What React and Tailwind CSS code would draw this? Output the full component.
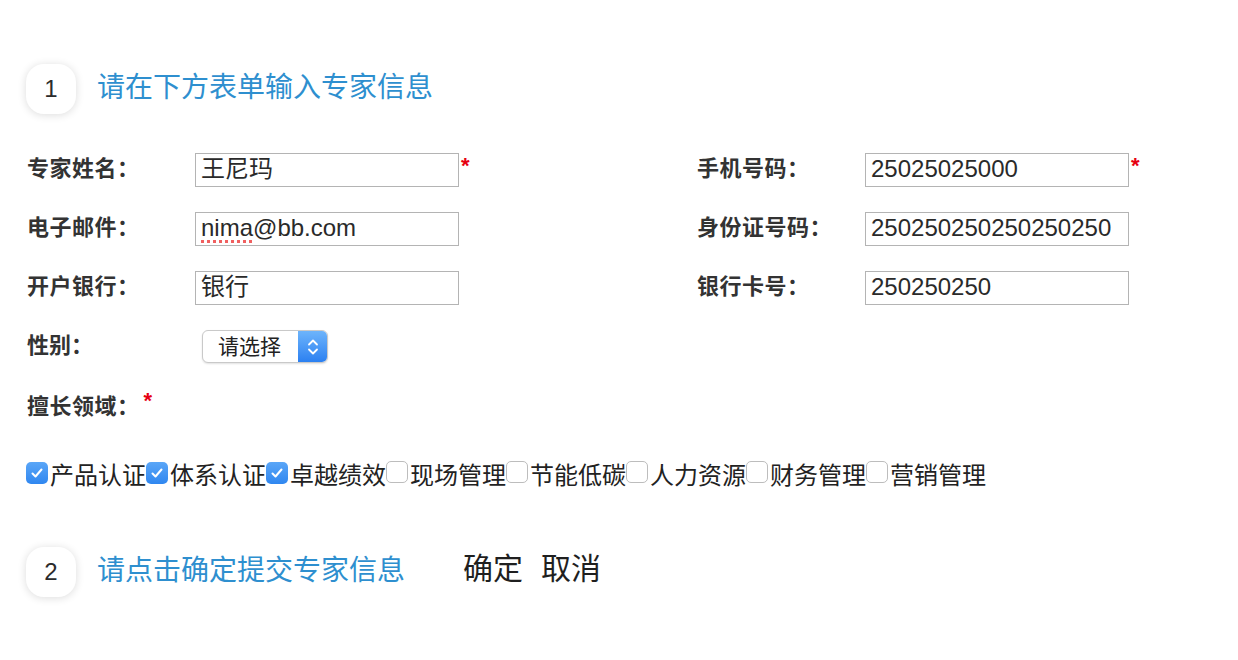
const cjk = "font-['Liberation_Sans','Noto_Sans_CJK_SC',sans-serif]"

const leftRows = [
  { label: '专家姓名：', value: '王尼玛', required: true },
  { label: '电子邮件：', value: 'nima@bb.com', spell: true },
  { label: '开户银行：', value: '银行' },
]

const rightRows = [
  { label: '手机号码：', value: '25025025000', required: true },
  { label: '身份证号码：', value: '250250250250250250' },
  { label: '银行卡号：', value: '250250250' },
]

const fields = [
  { name: '产品认证', checked: true },
  { name: '体系认证', checked: true },
  { name: '卓越绩效', checked: true },
  { name: '现场管理' },
  { name: '节能低碳' },
  { name: '人力资源' },
  { name: '财务管理' },
  { name: '营销管理' },
]

function Step({ n, children }) {
  return (
    <div className="flex items-center">
      <div className="w-[50px] h-[50px] rounded-[18px] bg-white shadow-[0_1px_8px_rgba(0,0,0,0.14)] flex items-center justify-center text-[24px] text-[#2b2b2b] font-['Liberation_Sans',sans-serif]">
        {n}
      </div>
      {children}
    </div>
  )
}

function Star() {
  return <span className="text-[#e60012] text-[22px] font-bold leading-none self-start mt-[2px] ml-[2px] font-['Liberation_Sans',sans-serif]">*</span>
}

function Row({ label, value, required, spell }) {
  return (
    <div className="flex items-center h-[34px]">
      <div className="w-[168px] -mt-[3px] text-[22px] font-bold text-[#333] tracking-[0.5px] leading-none">{label}</div>
      <div className="w-[264px] h-[34px] border border-[#b4b4b4] flex items-center px-[5px] pb-[3px] text-[24px] text-[#2a2a2a] leading-none whitespace-nowrap overflow-hidden">
        {spell ? (
          <>
            <span className="underline decoration-dotted decoration-[#f06060] decoration-[3px] underline-offset-[4px]">nima</span>
            @bb.com
          </>
        ) : (
          value
        )}
      </div>
      {required && <Star />}
    </div>
  )
}

function Box({ checked }) {
  if (checked) {
    return (
      <span className="w-[22px] h-[22px] rounded-[5px] bg-gradient-to-b from-[#5aa6f7] to-[#2f87f0] flex items-center justify-center shrink-0 -mt-[7px]">
        <svg width="16" height="16" viewBox="0 0 16 16" fill="none">
          <path d="M3.5 8.5l3 3L12.5 4.5" stroke="white" strokeWidth="2" strokeLinecap="round" strokeLinejoin="round" />
        </svg>
      </span>
    )
  }
  return <span className="w-[22px] h-[22px] rounded-[5px] bg-white border border-[#bdbdbd] shrink-0 -mt-[9px]" />
}

export default function App() {
  return (
    <div className={`min-h-screen bg-white pt-[64px] pl-[26px] ${cjk}`}>
      <Step n="1">
        <h2 className="ml-[21px] -mt-[3px] text-[28px] leading-none text-[#2e8fcf] font-normal">请在下方表单输入专家信息</h2>
      </Step>

      {/* form rows */}
      <div className="mt-[39px] pl-[1px] grid grid-cols-[670px_1fr] gap-y-[25px]">
        {leftRows.map((r, i) => (
          <div key={r.label} className="contents">
            <Row {...r} />
            <Row {...rightRows[i]} />
          </div>
        ))}
      </div>

      <div className="mt-[25px] pl-[1px] flex items-center h-[33px]">
        <div className="w-[175px] -mt-[2px] text-[22px] font-bold text-[#333] leading-none">性别：</div>
        <div className="w-[126px] h-[33px] rounded-[6px] border border-[#c9c9c9] shadow-[0_1px_2px_rgba(0,0,0,0.12)] flex overflow-hidden bg-white">
          <div className="flex-1 flex items-center pl-[15px] pb-[1px] text-[21px] text-[#222] leading-none">请选择</div>
          <div className="w-[29px] bg-gradient-to-b from-[#6db4fb] to-[#2b80f1] flex items-center justify-center">
            <svg width="14" height="22" viewBox="0 0 14 22" fill="none">
              <path d="M3 8.5L7 4.5l4 4" stroke="white" strokeWidth="1.8" strokeLinecap="round" strokeLinejoin="round" />
              <path d="M3 13.5l4 4 4-4" stroke="white" strokeWidth="1.8" strokeLinecap="round" strokeLinejoin="round" />
            </svg>
          </div>
        </div>
      </div>

      <div className="mt-[27px] pl-[1px] flex items-center h-[34px]">
        <span className="text-[22px] font-bold text-[#333] tracking-[0.5px] leading-none">擅长领域：</span>
        <span className="text-[#e60012] text-[22px] font-bold leading-none -mt-[12px] ml-[4px] font-['Liberation_Sans',sans-serif]">*</span>
      </div>

      <div className="mt-[37px] flex items-center h-[30px]">
        {fields.map((f) => (
          <label key={f.name} className="flex items-center">
            <Box checked={f.checked} />
            <span className="ml-[2px] text-[24px] text-[#222] leading-none">{f.name}</span>
          </label>
        ))}
      </div>

      <div className="mt-[56px]">
        <Step n="2">
          <h2 className="ml-[21px] -mt-[3px] text-[28px] leading-none text-[#2e8fcf] font-normal">请点击确定提交专家信息</h2>
          <div className="ml-[58px] -mt-[6px] flex gap-[18px] text-[30px] leading-none text-[#1f1f1f]">
            <button className="leading-none">确定</button>
            <button className="leading-none">取消</button>
          </div>
        </Step>
      </div>
    </div>
  )
}
